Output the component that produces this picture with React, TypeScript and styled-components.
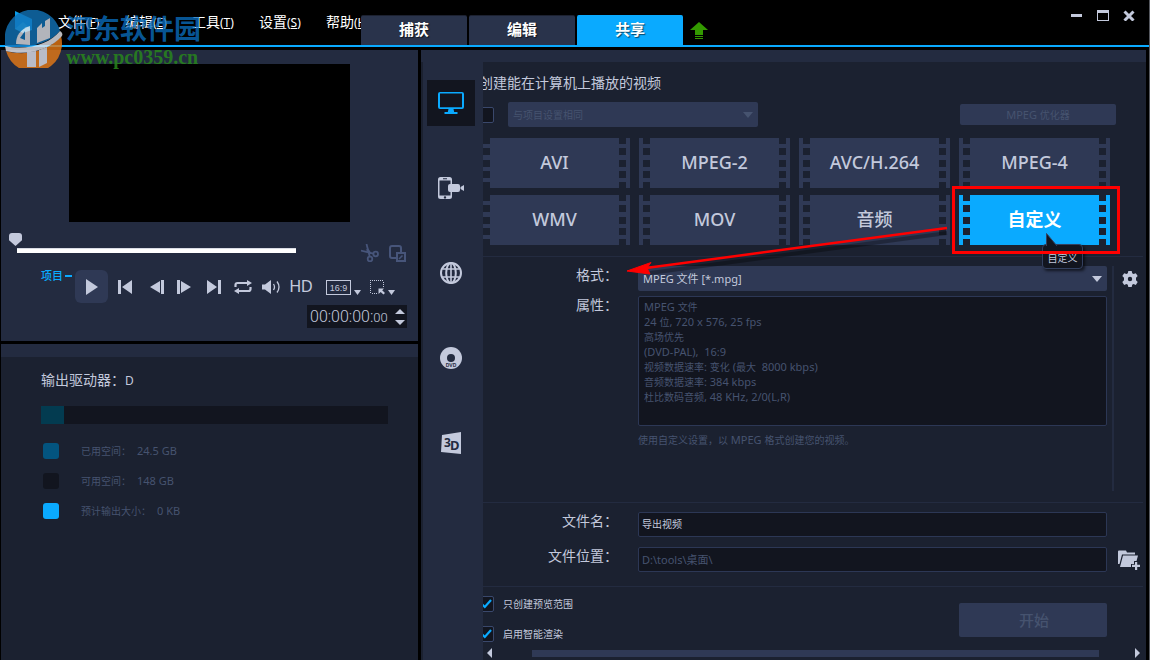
import React from "react";
import styled, { createGlobalStyle, ThemeProvider } from "styled-components";

const theme = {
  panel: "#232b40",
  body: "#1b2130",
  field: "#12151f",
  raised: "#2f3955",
  line: "#2c3755",
  text: "#c3c9dc",
  dim: "#46536f",
  accent: "#0aaaff",
};

const GlobalStyle = createGlobalStyle`
  * { box-sizing: border-box; }
  body {
    margin: 0;
    background: #000;
    font-family: "Noto Sans", "Noto Sans CJK SC", sans-serif;
    color: ${theme.text};
  }
  button, input, select { font-family: inherit; color: inherit; margin: 0; }
  button { border: 0; padding: 0; background: none; cursor: pointer; }
  svg { display: block; }
`;

/* ---------- shared text ---------- */

const Small = styled.span`
  font-size: 10px;
`;

/* Sets Chinese runs one size below the Latin letters around them. */
const Mixed = ({ children }: { children: string }) => (
  <>
    {children.split(/([\u3000-\u9fff\uff00-\uffef]+)/).map((part, i) =>
      i % 2 ? <Small key={i}>{part}</Small> : part
    )}
  </>
);

/* ---------- window frame ---------- */

const Shell = styled.div`
  position: relative;
  display: flex;
  flex-direction: column;
  min-height: 100vh;
  overflow: hidden;
  background: #000;
  border-right: 1px solid #55585f;
`;

const Header = styled.header`
  display: flex;
  align-items: flex-end;
  height: 47px;
  border-bottom: 2px solid ${(p) => p.theme.accent};
`;

const Menu = styled.nav`
  display: flex;
  align-self: flex-start;
  width: 361px;
  padding: 12px 0 0 58px;
  overflow: hidden;
`;

const MenuItem = styled.button`
  flex: 0 0 67px;
  height: 20px;
  line-height: 20px;
  text-align: left;
  white-space: nowrap;
  font-size: 14px;
  color: #fff;
`;

const Key = styled.span`
  font-size: 12px;
`;

const Tabs = styled.div`
  display: flex;
  gap: 2px;
`;

const Tab = styled.button<{ $active?: boolean }>`
  width: 106px;
  height: 30px;
  padding-bottom: 3px;
  border-top: 1px solid ${(p) => (p.$active ? p.theme.accent : "#1c2130")};
  border-radius: 2px 2px 0 0;
  background: ${(p) => (p.$active ? p.theme.accent : "#29334b")};
  color: #fff;
  font-size: 15px;
  font-weight: 700;
  line-height: 26px;
  text-shadow: 1px 1px 1px rgba(0, 0, 0, 0.6);
`;

const Upload = styled.button`
  margin: 0 0 6px 7px;
`;

const WindowButtons = styled.div`
  display: flex;
  gap: 14px;
  align-self: flex-start;
  margin: 9px 14px 0 auto;
`;

const Columns = styled.main`
  flex: 1;
  display: grid;
  grid-template-columns: 417px minmax(0, 1fr);
  gap: 3px;
  padding: 3px 3px 0 1px;
`;

/* ---------- watermark ---------- */

const Watermark = styled.div`
  position: absolute;
  left: 5px;
  top: 10px;
  display: flex;
  gap: 3px;
  pointer-events: none;
`;

const MarkName = styled.div`
  font-size: 27px;
  line-height: 38px;
  font-weight: 700;
  color: rgba(10, 110, 190, 0.8);
`;

const MarkSite = styled.div`
  font-family: "Liberation Serif", serif;
  font-size: 20px;
  line-height: 18px;
  font-weight: 700;
  color: rgba(40, 135, 28, 0.85);
`;

/* ---------- player ---------- */

const LeftColumn = styled.div`
  display: flex;
  flex-direction: column;
  gap: 3px;
`;

const Player = styled.section`
  height: 291px;
  padding-top: 14px;
  background: ${(p) => p.theme.panel};
`;

const Video = styled.div`
  width: 281px;
  height: 158px;
  margin: 0 auto;
  background: #000;
`;

const SeekRow = styled.div`
  display: flex;
  justify-content: space-between;
  align-items: flex-end;
  height: 40px;
  padding: 0 12px 0 8px;
`;

const Seek = styled.input`
  appearance: none;
  width: 287px;
  height: 20px;
  margin-bottom: 9px;
  padding-top: 15px;
  background: none;
  &::-webkit-slider-runnable-track {
    height: 5px;
    background: linear-gradient(#d8dbe4 1px, #fff 1px) 8px 0 no-repeat;
  }
  &::-webkit-slider-thumb {
    appearance: none;
    width: 13px;
    height: 13px;
    margin-top: -15px;
    background: ${(p) => p.theme.text};
    border-radius: 3px 3px 0 0;
    clip-path: polygon(0 0, 100% 0, 100% 55%, 50% 100%, 0 55%);
  }
`;

const ClipTools = styled.div`
  display: flex;
  gap: 10px;
  color: #47557a;
`;

const Transport = styled.div`
  display: flex;
  align-items: center;
  height: 33px;
  margin-top: 8px;
  padding-left: 40px;
`;

const Mode = styled.div`
  display: flex;
  align-items: center;
  gap: 2px;
  align-self: flex-start;
  width: 34px;
  font-size: 11px;
  font-weight: 500;
  line-height: 12px;
  color: ${(p) => p.theme.accent};
  &::after {
    content: "";
    width: 7px;
    height: 2px;
    background: ${(p) => p.theme.accent};
  }
`;

const PlayButton = styled.button`
  display: grid;
  place-items: center;
  width: 33px;
  height: 33px;
  border-radius: 6px;
  background: ${(p) => p.theme.raised};
`;

const Ctl = styled.button<{ $w: number }>`
  display: flex;
  justify-content: center;
  align-items: center;
  flex: 0 0 ${(p) => p.$w}px;
  height: 33px;
  font-family: "Liberation Sans", sans-serif;
  font-size: 16px;
`;

const Framing = styled.div`
  display: flex;
  gap: 9px;
  margin: 2px 0 0 12px;
`;

const Ratio = styled.button`
  display: flex;
  align-items: flex-end;
  gap: 3px;
`;

const RatioLabel = styled.span`
  width: 25px;
  height: 15px;
  border: 1px solid ${(p) => p.theme.text};
  font-family: "Liberation Sans", sans-serif;
  font-size: 9px;
  line-height: 14px;
  text-align: center;
`;

const Timecode = styled.div`
  display: flex;
  align-items: center;
  justify-content: space-between;
  width: 100px;
  height: 23px;
  margin: 2px 11px 0 auto;
  padding: 0 2px 0 3px;
  background: ${(p) => p.theme.field};
`;

const Digits = styled.span`
  font-family: Roboto, sans-serif;
  font-weight: 300;
  font-size: 16px;
  line-height: 23px;
`;

const Frames = styled.span`
  font-size: 13px;
`;

const Spinner = styled.div`
  display: flex;
  flex-direction: column;
  gap: 6px;
`;

/* ---------- drive ---------- */

const Drive = styled.section`
  flex: 1;
  border-top: 13px solid ${(p) => p.theme.panel};
  padding: 14px 30px 0 40px;
  background: ${(p) => p.theme.body};
`;

const DriveTitle = styled.h2`
  margin: 0;
  font-size: 14px;
  font-weight: 400;
  line-height: 18px;
`;

const DriveLetter = styled.span`
  font-size: 12px;
`;

const Usage = styled.div`
  height: 18px;
  margin: 16px 0 19px;
  background: ${(p) => p.theme.field};
`;

const Used = styled.div`
  height: 100%;
  background: #033b50;
`;

const Legend = styled.ul`
  display: grid;
  gap: 14px;
  margin: 0;
  padding: 0 0 0 2px;
  list-style: none;
`;

const LegendItem = styled.li<{ $color: string }>`
  display: flex;
  align-items: center;
  height: 16px;
  font-size: 11px;
  line-height: 18px;
  color: ${(p) => p.theme.dim};
  &::before {
    content: "";
    width: 16px;
    height: 16px;
    margin-right: 22px;
    border-radius: 3px;
    background: ${(p) => p.$color};
  }
`;

const Amount = styled.span`
  margin-left: 6px;
`;

/* ---------- share panel ---------- */

const Share = styled.section`
  display: grid;
  grid-template-columns: 60px minmax(0, 1fr);
  border-top: 12px solid ${(p) => p.theme.panel};
  padding-left: 2px;
  background: ${(p) => p.theme.body};
`;

const Side = styled.nav`
  display: flex;
  flex-direction: column;
  gap: 39px;
  padding: 18px 8px 0 4px;
  background: ${(p) => p.theme.panel};
`;

const SideButton = styled.button<{ $active?: boolean }>`
  display: grid;
  place-items: center;
  height: 46px;
  background: ${(p) => (p.$active ? p.theme.field : "transparent")};
  color: ${(p) => (p.$active ? p.theme.accent : p.theme.text)};
`;

const Content = styled.div`
  overflow: hidden;
`;

/* The pane is scrolled slightly sideways, so its left edge is cut off. */
const Scrolled = styled.div`
  margin-left: -4px;
`;

const Title = styled.h1`
  margin: 0;
  padding-top: 11px;
  font-size: 14px;
  font-weight: 400;
  line-height: 20px;
`;

const Options = styled.div`
  display: flex;
  align-items: center;
  height: 25px;
  margin: 9px 30px 11px 0;
`;

const Tick = styled.input`
  appearance: none;
  flex: 0 0 15px;
  height: 16px;
  border: 1px solid #3a486c;
  border-radius: 2px;
  background: ${(p) => p.theme.field};
`;

const TickBox = styled.span`
  position: relative;
  display: flex;
  width: 15px;
  svg {
    position: absolute;
    left: 2px;
    top: 3px;
    pointer-events: none;
  }
`;

const SelectBox = styled.div<{ $wide?: boolean; $off?: boolean }>`
  position: relative;
  width: ${(p) => (p.$wide ? "100%" : "250px")};
  height: 25px;
  margin-left: ${(p) => (p.$wide ? 0 : 14)}px;
  color: ${(p) => (p.$off ? p.theme.dim : p.theme.text)};
  svg {
    position: absolute;
    right: 5px;
    top: 10px;
    pointer-events: none;
  }
`;

const Select = styled.select`
  display: block;
  appearance: none;
  width: 100%;
  height: 25px;
  padding: 0 20px 0 5px;
  border: 0;
  border-radius: 2px;
  background: ${(p) => p.theme.raised};
  font-size: 11px;
  opacity: 1;
  &:disabled { font-size: 10px; }
`;

const Optimizer = styled.button`
  width: 156px;
  height: 21px;
  margin-left: auto;
  border-radius: 2px;
  background: ${(p) => p.theme.raised};
  color: ${(p) => p.theme.dim};
  font-size: 11px;
  line-height: 21px;
`;

const Tiles = styled.div`
  display: grid;
  grid-template-columns: repeat(4, minmax(0, 1fr));
  gap: 7px 9px;
  padding-right: 36px;
`;

const TileCell = styled.div<{ $raised: boolean }>`
  position: relative;
  z-index: ${(p) => (p.$raised ? 1 : 0)};
`;

const Tile = styled.button<{ $active?: boolean }>`
  display: flex;
  justify-content: space-between;
  align-items: flex-start;
  width: 100%;
  height: 50px;
  padding: 0 4px;
  background: ${(p) => (p.$active ? p.theme.accent : p.theme.raised)};
  color: ${(p) => (p.$active ? "#fff" : p.theme.text)};
  font-size: 18px;
  line-height: 48px;
  font-weight: ${(p) => (p.$active ? 700 : 500)};
  &::before,
  &::after {
    content: "";
    width: 7px;
    height: 50px;
    background: linear-gradient(
      ${(p) => p.theme.body} 6px, transparent 6px 10px,
      ${(p) => p.theme.body} 10px 17px, transparent 17px 22px,
      ${(p) => p.theme.body} 22px 29px, transparent 29px 33px,
      ${(p) => p.theme.body} 33px 40px, transparent 40px 44px,
      ${(p) => p.theme.body} 44px
    );
  }
`;

const Highlight = styled.div`
  position: absolute;
  inset: -9px -10px -9px -7px;
  border: 3px solid #f00;
  pointer-events: none;
`;

const Tooltip = styled.div`
  position: absolute;
  left: 83px;
  top: 49px;
  width: 41px;
  height: 25px;
  border: 1px solid #33405f;
  border-radius: 4px;
  background: ${(p) => p.theme.field};
  box-shadow: 2px 2px 3px rgba(0, 0, 0, 0.6);
  font-size: 10px;
  line-height: 26px;
  text-align: center;
  svg {
    position: absolute;
    left: 2px;
    top: -13px;
  }
`;

const Arrow = styled.svg`
  position: absolute;
  right: calc(100% + 10px);
  top: 28px;
  pointer-events: none;
`;

const Section = styled.div<{ $kind: "format" | "file" }>`
  display: grid;
  grid-template-columns: 159px minmax(0, 1fr) 36px;
  grid-template-rows: ${(p) => (p.$kind === "format" ? "25px 130px 1fr" : "25px 25px")};
  row-gap: ${(p) => (p.$kind === "format" ? 5 : 10)}px;
  min-height: ${(p) => (p.$kind === "format" ? 246 : 84)}px;
  margin: ${(p) => (p.$kind === "format" ? "11px 3px 0 0" : "0 3px 0 0")};
  padding: ${(p) => (p.$kind === "format" ? "9px 0 11px" : "9px 0 14px")};
  border-top: 1px solid ${(p) => p.theme.panel};
`;

const Label = styled.label`
  padding-right: 20px;
  text-align: right;
  font-size: 14px;
  line-height: 18px;
  white-space: nowrap;
`;

const Properties = styled.output`
  padding: 2px 5px;
  border: 1px solid ${(p) => p.theme.line};
  border-radius: 2px;
  background: ${(p) => p.theme.field};
  color: ${(p) => p.theme.dim};
  font-size: 11px;
  line-height: 15px;
  white-space: pre;
`;

const PropertyLine = styled.div`
  height: 15px;
`;

const Note = styled.p`
  grid-column: 2;
  margin: 1px 0 0;
  font-size: 11px;
  line-height: 16px;
  color: ${(p) => p.theme.dim};
`;

const Aside = styled.div`
  grid-column: 3;
  grid-row: 1 / 4;
  margin-left: 5px;
  padding: 4px 0 0 8px;
  border-left: 2px solid ${(p) => p.theme.panel};
`;

const TextField = styled.input<{ $off?: boolean }>`
  width: 100%;
  height: 25px;
  padding: 0 3px 2px;
  border: 1px solid ${(p) => p.theme.line};
  border-radius: 2px;
  background: ${(p) => p.theme.field};
  color: ${(p) => (p.$off ? p.theme.dim : p.theme.text)};
  font-size: ${(p) => (p.$off ? 11 : 10)}px;
`;

const FolderButton = styled.button`
  grid-column: 3;
  padding-left: 11px;
`;

const Footer = styled.div`
  display: flex;
  justify-content: space-between;
  margin-right: 3px;
  padding: 9px 36px 5px 0;
  border-top: 1px solid ${(p) => p.theme.panel};
`;

const Checks = styled.div`
  display: grid;
  gap: 14px;
`;

const Check = styled.label`
  display: flex;
  align-items: center;
  gap: 9px;
  height: 16px;
  font-size: 10px;
  line-height: 16px;
`;

const Start = styled.button`
  width: 148px;
  height: 34px;
  margin-top: 7px;
  padding: 0 0 2px 2px;
  border-radius: 2px;
  background: ${(p) => p.theme.raised};
  color: ${(p) => p.theme.dim};
  font-size: 15px;
  font-weight: 500;
`;

const ScrollBar = styled.div`
  display: flex;
  align-items: center;
  height: 12px;
  padding: 0 6px 0 8px;
`;

const ScrollThumb = styled.div`
  flex: 1;
  height: 7px;
  margin: 0 36px 0 40px;
  background: ${(p) => p.theme.raised};
`;

/* ---------- drawings ---------- */

const Caret = ({ w = 10, h = 6, up = false }: { w?: number; h?: number; up?: boolean }) => (
  <svg width={w} height={h} viewBox="0 0 10 6" preserveAspectRatio="none" fill="currentColor">
    <path d={up ? "M0 6 5 0l5 6z" : "M0 0h10L5 6z"} />
  </svg>
);

const TickMark = () => (
  <svg width="11" height="10" viewBox="0 0 11 10" fill="none" stroke={theme.accent} strokeWidth="2.2">
    <path d="M1 5.2 3.8 8 10 1" />
  </svg>
);

const Logo = () => (
  <svg width="58" height="58" viewBox="0 0 58 58">
    <path d="M10 1 27 9v11L10 19z" fill="#0a9be8" />
    <path d="M10 19l8-7 9 8-9 3z" fill="#35c3f5" />
    <g opacity="0.8">
      <path d="M0 31A28 28 0 0 1 55 21C44 34 20 40 0 36z" fill="#1273b8" />
      <path d="M1 41c21 6 44-1 55-15A28 28 0 0 1 1 41z" fill="#e87a15" />
      <path d="M11 34c0-8 4-15 14-18v19z" fill="#dfe1ea" />
      <path d="M15 28l5-7v9z" fill="#1273b8" />
      <path d="M32 33V18l5-5v5l3-2v-5l5-3v20z" fill="#dfe1ea" />
      <path d="M22 42l9-1v16h-9zM34 40l8-3v16l-8 4z" fill="#dfe1ea" />
      <path d="M0 36c22 5 45-2 55-15 2 1 3 3 2 5C45 40 21 46 1 41z" fill="#e6e8ee" />
    </g>
  </svg>
);

const Monitor = () => (
  <svg width="26" height="24" viewBox="0 0 26 24" fill="currentColor">
    <path fillRule="evenodd" d="M2 1h22q2 0 2 2v13q0 2-2 2H2q-2 0-2-2V3q0-2 2-2zm0 1.500v13.800h22V2.500z" />
    <path d="M10.500 18h5l.7 3H19.500v2h-13v-2h3.300z" />
  </svg>
);

const Phone = () => (
  <svg width="26" height="24" viewBox="0 0 26 24" fill="currentColor">
    <path
      fillRule="evenodd"
      d="M2.500 1h9q2.500 0 2.500 2.500V8h-1.500V4.500h-11v15h11V16H14v4.500q0 2.500-2.500 2.500h-9Q0 23 0 20.500v-17Q0 1 2.500 1zM5 2.300v1h4v-1zm2 17.900a1.200 1.200 0 1 0 0 2.400 1.200 1.200 0 0 0 0-2.400z"
    />
    <rect x="10" y="8" width="12" height="8" rx="2" />
    <path d="M22.500 11 26 9v6l-3.500-2z" />
  </svg>
);

const Globe = () => (
  <svg width="22" height="22" viewBox="0 0 22 22" fill="none" stroke="currentColor" strokeWidth="2">
    <circle cx="11" cy="11" r="10" />
    <ellipse cx="11" cy="11" rx="4.800" ry="10" />
    <path d="M11 1v20M2.500 7h17M2.500 15h17" strokeWidth="1.600" />
  </svg>
);

const Disc = () => (
  <svg width="22" height="22" viewBox="0 0 22 22">
    <circle cx="11" cy="11" r="11" fill="currentColor" />
    <circle cx="11" cy="11" r="4" fill={theme.panel} />
    <text x="11" y="20" textAnchor="middle" fontFamily="Liberation Sans" fontSize="5" fontWeight="700" fill={theme.panel}>
      DVD
    </text>
  </svg>
);

const ThreeD = () => (
  <svg width="20" height="22" viewBox="0 0 20 22">
    <path d="M1 3 20 0v22L0 20z" fill="currentColor" />
    <text x="3" y="15" fontFamily="Noto Sans" fontSize="12" fontWeight="700" fill={theme.panel}>3</text>
    <text x="9" y="18" fontFamily="Noto Sans" fontSize="13" fontWeight="700" fill={theme.panel}>D</text>
  </svg>
);

const Scissors = () => (
  <svg width="18" height="18" viewBox="0 0 18 18" fill="none" stroke="currentColor" strokeWidth="1.800">
    <circle cx="14.700" cy="10" r="2.300" />
    <circle cx="9" cy="15" r="2.300" />
    <path d="M12.400 9.600 0 6.500M8.700 12.600 5.500 0" />
    <path d="M6 5l3.500 5" strokeWidth="2.500" />
  </svg>
);

const Overlap = () => (
  <svg width="17" height="17" viewBox="0 0 17 17" fill="none" stroke="currentColor" strokeWidth="2">
    <path d="M7 13H3q-2 0-2-2V3q0-2 2-2h7q2 0 2 2v4" />
    <path d="M8 8h8v8H8z" />
    <path d="M10 14 13.500 10.500" strokeWidth="1.600" />
  </svg>
);

const Skip = ({ d }: { d: string }) => (
  <svg width="14" height="14" viewBox="0 0 14 14" fill="currentColor">
    <path d={d} />
  </svg>
);

const Repeat = () => (
  <svg width="18" height="14" viewBox="0 0 18 14" fill="none" stroke="currentColor" strokeWidth="2.200">
    <path d="M1.500 7V5q0-2 2-2H13M16.500 7v2q0 2-2 2H5" />
    <path d="M13 0l5 3-5 3zM5 8l-5 3 5 3z" fill="currentColor" stroke="none" />
  </svg>
);

const Volume = () => (
  <svg width="19" height="14" viewBox="0 0 19 14" fill="none" stroke="currentColor" strokeWidth="1.300">
    <path d="M0 4.500h3L9 0v14L3 9.500H0z" fill="currentColor" stroke="none" />
    <path d="M11.500 4q2 3 0 6M15 1.500q4 5.500 0 11" />
  </svg>
);

const Marquee = () => (
  <svg width="15" height="15" viewBox="0 0 15 15">
    <path
      d="M0 .5h14M.5 2v12M13.500 2v6M2 13.500h5"
      fill="none"
      stroke="currentColor"
      strokeDasharray="1 1"
      shapeRendering="crispEdges"
    />
    <path d="M8.500 8.500h5.500l-1.800 1.800L15 13 13.400 14.600l-2.700-2.700-2.200 2z" fill="currentColor" />
  </svg>
);

const Gear = () => (
  <svg width="16" height="16" viewBox="0 0 16 16" fill="currentColor">
    <path
      fillRule="evenodd"
      d="M6.300 0h3.400l.5 2.300 1.300.7 2.300-.8L15.700 5 14 6.700v2.600L15.700 11l-1.900 2.900-2.300-.8-1.300.7-.5 2.200H6.300l-.5-2.200-1.300-.7-2.300.8L.3 11 2 9.300V6.700L.3 5l1.900-2.800 2.300.8 1.300-.7zM8 5.800a2.200 2.200 0 1 0 0 4.400 2.200 2.200 0 0 0 0-4.400z"
    />
  </svg>
);

const Folder = () => (
  <svg width="22" height="20" viewBox="0 0 22 20" fill="currentColor">
    <path d="M0 1.500Q0 .5 1 .5h7l1 2h8v2H4L1.500 14H0z" />
    <path d="M5 5.500h15l-1.500 5.500H16v3h-3v3H2z" />
    <path d="M17 12h2.200v2.800H22V17h-2.800v3H17v-3h-3v-2.200h3z" />
  </svg>
);

const menu = [
  ["文件", "F"],
  ["编辑", "E"],
  ["工具", "T"],
  ["设置", "S"],
  ["帮助", "H"],
];

const formats = ["AVI", "MPEG-2", "AVC/H.264", "MPEG-4", "WMV", "MOV", "音频", "自定义"];

const properties = [
  "MPEG 文件",
  "24 位, 720 x 576, 25 fps",
  "高场优先",
  "(DVD-PAL),  16:9",
  "视频数据速率: 变化 (最大  8000 kbps)",
  "音频数据速率: 384 kbps",
  "杜比数码音频, 48 KHz, 2/0(L,R)",
];

const drive = [
  { label: "已用空间：", amount: "24.5 GB", color: "#03547f" },
  { label: "可用空间：", amount: "148 GB", color: theme.field },
  { label: "预计输出大小：", amount: "0 KB", color: theme.accent },
];

const transport: [string, number, React.ReactNode][] = [
  ["起始", 34, <Skip d="M0 0h3v14H0zM14 0v14L4 7z" />],
  ["上一帧", 30, <Skip d="M14 0h-3v14h3zM10 1v12L0 7z" />],
  ["下一帧", 24, <Skip d="M0 0h3v14H0zM4 1v12l10-6z" />],
  ["结束", 36, <Skip d="M14 0h-3v14h3zM0 0v14l10-7z" />],
  ["重复", 22, <Repeat />],
  ["音量", 34, <Volume />],
  ["高清", 26, "HD"],
];

export default function App() {
  return (
    <ThemeProvider theme={theme}>
      <GlobalStyle />
      <Shell>
        <Header>
          <Menu>
            {menu.map(([name, key]) => (
              <MenuItem key={key}>
                {name}
                <Key>
                  (<u>{key}</u>)
                </Key>
              </MenuItem>
            ))}
          </Menu>
          <Tabs>
            <Tab>捕获</Tab>
            <Tab>编辑</Tab>
            <Tab $active>共享</Tab>
          </Tabs>
          <Upload aria-label="上传">
            <svg width="18" height="17" viewBox="0 0 18 17" fill="#339900">
              <path d="M9 0l9 8h-5v5H5V8H0zM5 14h8v1H5zM5 16h8v1H5z" />
            </svg>
          </Upload>
          <WindowButtons>
            <button aria-label="最小化">
              <svg width="12" height="12" fill={theme.text}><path d="M0 5h11v3H0z" /></svg>
            </button>
            <button aria-label="最大化">
              <svg width="12" height="12" fill={theme.text}>
                <path fillRule="evenodd" d="M0 1h12v11H0zM1 4v7h10V4z" />
              </svg>
            </button>
            <button aria-label="关闭">
              <svg width="12" height="12" stroke={theme.text} strokeWidth="3"><path d="M1.500 2.500l9 9M10.500 2.500l-9 9" /></svg>
            </button>
          </WindowButtons>
        </Header>

        <Columns>
          <LeftColumn>
            <Player>
              <Video />
              <SeekRow>
                <Seek type="range" min={0} max={100} defaultValue={0} aria-label="播放位置" />
                <ClipTools>
                  <button aria-label="剪切"><Scissors /></button>
                  <button aria-label="复制"><Overlap /></button>
                </ClipTools>
              </SeekRow>
              <Transport>
                <Mode>项目</Mode>
                <PlayButton aria-label="播放">
                  <svg width="12" height="16" fill={theme.text}><path d="M0 0l12 8-12 8z" /></svg>
                </PlayButton>
                {transport.map(([name, w, icon]) => (
                  <Ctl key={name} $w={w} aria-label={name}>
                    {icon}
                  </Ctl>
                ))}
                <Framing>
                  <Ratio aria-label="宽高比">
                    <RatioLabel>16:9</RatioLabel>
                    <Caret w={7} h={5} />
                  </Ratio>
                  <Ratio aria-label="选择区域">
                    <Marquee />
                    <Caret w={7} h={5} />
                  </Ratio>
                </Framing>
              </Transport>
              <Timecode>
                <Digits>
                  00:00:00:<Frames>00</Frames>
                </Digits>
                <Spinner>
                  <button aria-label="增加"><Caret w={10} h={5} up /></button>
                  <button aria-label="减少"><Caret w={10} h={5} /></button>
                </Spinner>
              </Timecode>
            </Player>

            <Drive>
              <DriveTitle>
                输出驱动器：<DriveLetter>D</DriveLetter>
              </DriveTitle>
              <Usage>
                <Used style={{ width: `${(23 / 347) * 100}%` }} />
              </Usage>
              <Legend>
                {drive.map((d) => (
                  <LegendItem key={d.label} $color={d.color}>
                    <Small>{d.label}</Small>
                    <Amount>{d.amount}</Amount>
                  </LegendItem>
                ))}
              </Legend>
            </Drive>
          </LeftColumn>

          <Share>
            <Side>
              <SideButton $active aria-label="计算机"><Monitor /></SideButton>
              <SideButton aria-label="设备"><Phone /></SideButton>
              <SideButton aria-label="网络"><Globe /></SideButton>
              <SideButton aria-label="光盘"><Disc /></SideButton>
              <SideButton aria-label="3D 影片"><ThreeD /></SideButton>
            </Side>
            <Content>
              <Scrolled>
                <Title>创建能在计算机上播放的视频</Title>
                <Options>
                  <Tick type="checkbox" aria-label="与项目设置相同" />
                  <SelectBox $off>
                    <Select disabled aria-label="项目设置">
                      <option>与项目设置相同</option>
                    </Select>
                    <Caret />
                  </SelectBox>
                  <Optimizer disabled>
                    <Mixed>MPEG 优化器</Mixed>
                  </Optimizer>
                </Options>
                <Tiles>
                  {formats.map((name) => {
                    const active = name === "自定义";
                    return (
                      <TileCell key={name} $raised={active}>
                        <Tile $active={active}>{name}</Tile>
                        {active && (
                          <>
                            <Tooltip role="tooltip">
                              <svg width="14" height="14" viewBox="0 0 14 14">
                                <path d="M1.500 14V1.500L12 14" fill={theme.field} stroke="#33405f" />
                              </svg>
                              自定义
                            </Tooltip>
                            <Highlight />
                            <Arrow width="325" height="60" viewBox="0 0 325 60">
                              <path d="M26 50 323 10" stroke="#000" strokeOpacity="0.3" strokeWidth="4" />
                              <path d="M22 45 323 5" stroke="#f00" strokeWidth="2.500" />
                              <path d="M3 48 27 39.500 23 45 26 51z" fill="#f00" stroke="#f00" />
                            </Arrow>
                          </>
                        )}
                      </TileCell>
                    );
                  })}
                </Tiles>

                <Section $kind="format">
                  <Label htmlFor="format">格式：</Label>
                  <SelectBox $wide>
                    <Select id="format">
                      <option>MPEG 文件 [*.mpg]</option>
                    </Select>
                    <Caret />
                  </SelectBox>
                  <Label htmlFor="properties">属性：</Label>
                  <Properties id="properties">
                    {properties.map((line) => (
                      <PropertyLine key={line}>
                        <Mixed>{line}</Mixed>
                      </PropertyLine>
                    ))}
                  </Properties>
                  <Note>
                    <Mixed>使用自定义设置，以 MPEG 格式创建您的视频。</Mixed>
                  </Note>
                  <Aside>
                    <button aria-label="选项"><Gear /></button>
                  </Aside>
                </Section>

                <Section $kind="file">
                  <Label htmlFor="name">文件名：</Label>
                  <TextField id="name" defaultValue="导出视频" />
                  <span />
                  <Label htmlFor="place">文件位置：</Label>
                  <TextField id="place" $off readOnly value="D:\tools\桌面\" />
                  <FolderButton aria-label="浏览"><Folder /></FolderButton>
                </Section>

                <Footer>
                  <Checks>
                    {["只创建预览范围", "启用智能渲染"].map((name) => (
                      <Check key={name}>
                        <TickBox>
                          <Tick type="checkbox" defaultChecked />
                          <TickMark />
                        </TickBox>
                        {name}
                      </Check>
                    ))}
                  </Checks>
                  <Start disabled>开始</Start>
                </Footer>
                <ScrollBar>
                  <button aria-label="向左">
                    <svg width="5" height="10" fill={theme.text}><path d="M5 0v10L0 5z" /></svg>
                  </button>
                  <ScrollThumb />
                  <button aria-label="向右">
                    <svg width="5" height="10" fill={theme.text}><path d="M0 0v10l5-5z" /></svg>
                  </button>
                </ScrollBar>
              </Scrolled>
            </Content>
          </Share>
        </Columns>

        <Watermark aria-hidden>
          <Logo />
          <div>
            <MarkName>河东软件园</MarkName>
            <MarkSite>www.pc0359.cn</MarkSite>
          </div>
        </Watermark>
      </Shell>
    </ThemeProvider>
  );
}
